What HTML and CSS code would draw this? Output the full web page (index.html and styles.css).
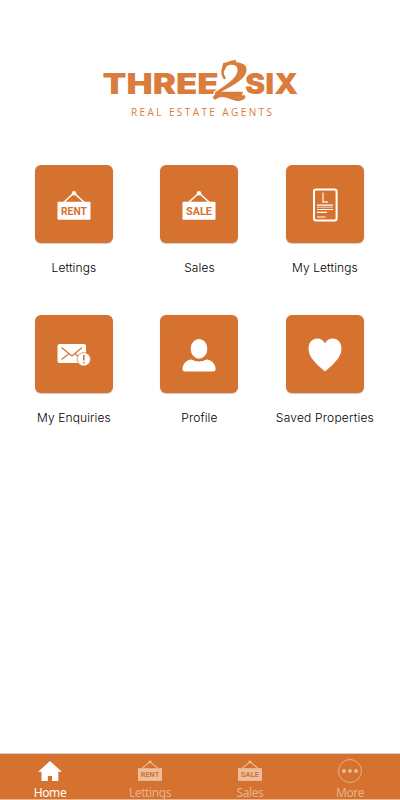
FILE: index.html
```html
<!DOCTYPE html>
<html lang="en">
<head>
<meta charset="utf-8">
<title>Three2Six Real Estate Agents</title>
<link rel="stylesheet" href="styles.css">
</head>
<body>
<header class="brand">
  <svg class="logo" width="210" height="66" viewBox="98 56 210 66">
    <g transform="translate(102.5 94.2)"><text class="word" textLength="98.5" lengthAdjust="spacingAndGlyphs" transform="scale(1.18 1)">THREE</text></g>
    <g transform="translate(245 94.2)"><text class="word" textLength="45" lengthAdjust="spacingAndGlyphs" transform="scale(1.18 1)">SIX</text></g>
    <text class="numeral" x="215" y="97" textLength="33" lengthAdjust="spacingAndGlyphs">2</text>
    <path class="swash" d="M224.5 78C220 72 224 62 235 61.2"/>
    <path class="swash foot" d="M215 97.5C220 93 227 95 233 98Q240 101 243.5 97"/>
    <text class="tagline" x="131" y="115.8" textLength="141">REAL ESTATE AGENTS</text>
  </svg>
</header>
<main class="menu">
  <a class="item"><span class="tile"><svg width="34" height="34" viewBox="0 0 34 34"><path class="rope" d="M6 15 17 5 28 15"/><circle cx="17" cy="5.2" r="2.2"/><rect x=".5" y="13.7" width="33" height="18" rx="1"/><text class="sign" x="4" y="26.5" textLength="26" lengthAdjust="spacingAndGlyphs">RENT</text></svg></span><span class="label">Lettings</span></a>
  <a class="item"><span class="tile"><svg width="34" height="34" viewBox="0 0 34 34"><path class="rope" d="M6 15 17 5 28 15"/><circle cx="17" cy="5.2" r="2.2"/><rect x=".5" y="13.7" width="33" height="18" rx="1"/><text class="sign" x="4" y="26.5" textLength="26" lengthAdjust="spacingAndGlyphs">SALE</text></svg></span><span class="label">Sales</span></a>
  <a class="item"><span class="tile"><svg width="34" height="34" viewBox="0 0 34 34"><rect class="outline" x="6" y="1.4" width="22.6" height="31.2" rx="2"/><path class="letter" d="M15 4.5V14H20"/><path class="line" d="M9 17.2H25M9 21.5H25M9 24.4H19M9 29H17.5"/><path class="redline" d="M9 19.2H25"/></svg></span><span class="label">My Lettings</span></a>
  <a class="item"><span class="tile"><svg width="34" height="34" viewBox="0 0 34 34"><rect x=".5" y="6" width="28.5" height="19" rx="2"/><path class="crease" d="M4.5 9.5 15 18 25 9.5M4.5 21.5 12 15.8M25 21.5 18 15.8"/><circle class="alert" cx="26.8" cy="21.3" r="6.7"/><path class="mark" d="M26.8 17V22.5M26.8 24V25.6"/></svg></span><span class="label">My Enquiries</span></a>
  <a class="item"><span class="tile"><svg width="34" height="34" viewBox="0 0 34 34"><ellipse cx="17" cy="10.8" rx="8.3" ry="9.9"/><path d="M9.3 21.6Q17 25.5 24.7 21.6C29 21.7 33.6 26 33.6 31Q33.6 33.5 31 33.5H3Q.5 33.5 .5 31C.5 26 5 21.7 9.3 21.6Z"/></svg></span><span class="label">Profile</span></a>
  <a class="item"><span class="tile"><svg width="34" height="34" viewBox="0 0 34 34"><path d="M17 33.5C11.5 28.5.5 20.5.5 10.8.5 4.8 4.3.6 9 .6 12.6.6 15.5 2.5 17 5.4 18.5 2.5 21.4.6 25 .6 29.7.6 33.5 4.8 33.5 10.8 33.5 20.5 22.5 28.5 17 33.5Z"/></svg></span><span class="label wide">Saved Properties</span></a>
</main>
<nav class="tabs">
  <a class="tab active"><svg width="24" height="24" viewBox="0 0 24 24"><path d="M12 2 .2 12.8H3.5V22H9.8V17H14V22H20.3V12.8H23.8Z"/></svg><span>Home</span></a>
  <a class="tab"><svg width="24" height="24" viewBox="0 0 34 34"><path class="rope" d="M6 13 17 4 28 13"/><circle cx="17" cy="4" r="2"/><rect y="13" width="34" height="18"/><text class="sign" x="4" y="26" textLength="26" lengthAdjust="spacingAndGlyphs">RENT</text></svg><span>Lettings</span></a>
  <a class="tab"><svg width="24" height="24" viewBox="0 0 34 34"><path class="rope" d="M6 13 17 4 28 13"/><circle cx="17" cy="4" r="2"/><rect y="13" width="34" height="18"/><text class="sign" x="4" y="26" textLength="26" lengthAdjust="spacingAndGlyphs">SALE</text></svg><span>Sales</span></a>
  <a class="tab"><svg width="24" height="24" viewBox="0 0 24 24"><circle class="ring" cx="12" cy="12" r="11.5"/><circle cx="6" cy="12" r="1.9"/><circle cx="12" cy="12" r="1.9"/><circle cx="18" cy="12" r="1.9"/></svg><span>More</span></a>
</nav>
</body>
</html>
```
FILE: styles.css
```css
* { box-sizing: border-box; }
body { margin: 0; width: 400px; height: 800px; background: #fff; display: flex; flex-direction: column; overflow: hidden; }
svg { display: block; }
.brand { height: 165px; padding: 56px 0 0 98px; }
.logo { fill: #d97c3c; }
.word { font: 900 28.6px Inter, sans-serif; }
.numeral { font: italic 700 53px "Liberation Serif", serif; stroke: #fff; stroke-width: 2.4; paint-order: stroke; }
.swash { fill: none; stroke: #d97c3c; stroke-width: 2.5; stroke-linecap: round; }
.foot { stroke-width: 4; }
.tagline { font: 400 10px "Open Sans", sans-serif; }
.menu { flex: 1; display: grid; grid-template-columns: repeat(3, 125.5px); grid-auto-rows: 150px; padding-left: 11.2px; }
.item { display: flex; flex-direction: column; align-items: center; }
.tile { width: 78px; height: 78px; border-radius: 6px; background: #d5722f; box-shadow: 0 1px 1px #0003; display: grid; place-items: center; fill: #fff; }
.tile svg { margin-top: 1px; }
.label { margin-top: 16px; font: 300 12px/17px Inter, sans-serif; color: #000; letter-spacing: .1px; white-space: nowrap; }
.wide { letter-spacing: .2px; }
.rope { fill: none; stroke: #fff; stroke-width: 1.6; }
.sign { font: 700 10.8px Roboto, sans-serif; fill: #d5722f; }
.outline { fill: none; stroke: #fff; stroke-width: 2; }
.letter { fill: none; stroke: #fbe4d6; stroke-width: 1.4; }
.line { stroke: #fff; stroke-width: 1.2; }
.redline { stroke: #f6c9b8; stroke-width: 1.1; }
.crease { fill: none; stroke: #d5722f; stroke-width: 1.2; }
.alert { stroke: #d5722f; stroke-width: .7; }
.mark { stroke: #d5722f; stroke-width: 1.6; }
.tabs { height: 47px; display: grid; grid-template-columns: repeat(4, 1fr); background: #d5722f; border-top: 1px solid #d9cdc6; border-bottom: 1px solid #e9b892; }
.tab { display: flex; flex-direction: column; align-items: center; padding-top: 5px; font: 400 12px/16px "Noto Sans", sans-serif; letter-spacing: -.4px; color: #e9b28d; fill: #edbd9c; }
.tab svg { letter-spacing: 0; }
.tab span { margin-top: 2px; }
.tab .rope { stroke: #edbd9c; }
.ring { fill: none; stroke: #edbd9c; stroke-width: .8; }
.active { color: #fff; fill: #fff; }
```
